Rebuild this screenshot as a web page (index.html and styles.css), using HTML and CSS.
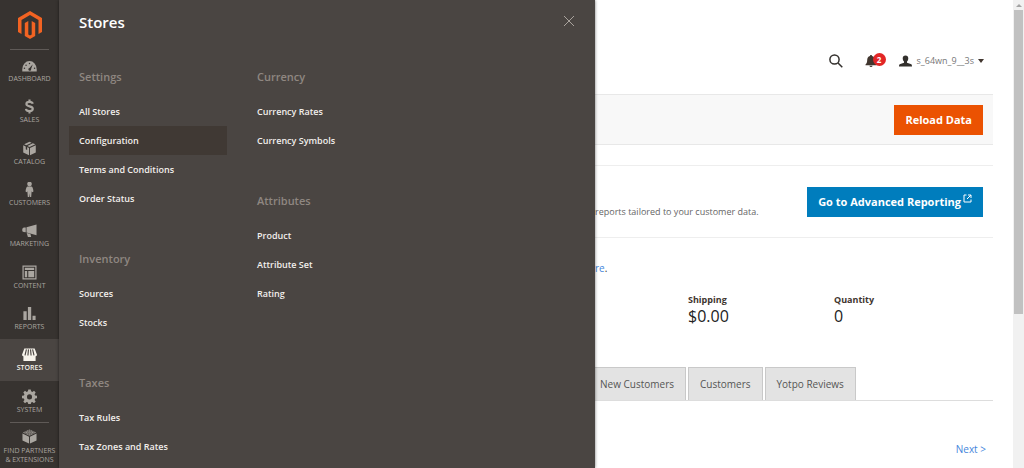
FILE: index.html
```html
<!DOCTYPE html>
<html lang="en">
<head>
<meta charset="utf-8">
<title>Dashboard / Magento Admin</title>
<link rel="stylesheet" href="styles.css">
</head>
<body>
<div class="app">
  <nav class="sidebar" aria-label="Main">
    <a class="logo" href="#" aria-label="Magento">
      <svg viewBox="0 0 24 28"><path fill="#f26322" d="M12 0 24 7v14l-3.500 2V9L12 4 3.500 9v14L0 21V7zM10.300 10v13.500l1.700 1 1.700-1V10l3.500 2v13L12 28l-5.200-3V12z"/></svg>
    </a>
    <ul class="nav-list">
      <li><a class="nav-item" href="#"><svg class="icon" viewBox="0 0 16 16"><path d="M.3 14.500V12a7.700 8.800 0 0 1 15.400 0v2.500z"/><g fill="#373330"><circle cx="2.600" cy="11" r=".8"/><circle cx="4.300" cy="7.700" r=".8"/><circle cx="8" cy="5.800" r=".8"/><circle cx="13.400" cy="11" r=".8"/><path d="m11.500 6.700-1.800 5a1.500 1.500 0 1 1-1.700-1z"/></g></svg>Dashboard</a></li>
      <li><a class="nav-item" href="#"><svg class="icon" viewBox="0 0 16 16"><path fill="none" stroke="currentColor" stroke-width="2.300" d="M11.500 5C11 3.300 9.700 3 8 3 6 3 4.700 3.900 4.700 5.300c0 3.500 6.800 1.600 6.800 5.200C11.500 12 10.200 13 8 13s-3.500-.8-3.800-2.500M8 .5v3M8 12.500v3"/></svg>Sales</a></li>
      <li><a class="nav-item" href="#"><svg class="icon" viewBox="0 0 16 16"><path d="m8 .8 2.300 1-5.800 2.700L2.300 3.400zM11.500 2.300l2.800 1.200L8 6.400 5.700 5.300zM1.300 4.500l2.700 1.300v3l1.500.7v-3l2 .9v7.800l-6.200-3zM14.700 4.500v7.700l-6.200 3V7.400z"/></svg>Catalog</a></li>
      <li><a class="nav-item" href="#"><svg class="icon" viewBox="0 0 16 16"><circle cx="8" cy="2.200" r="2.500"/><path d="M5.800 4.800h4.400c1.200.5 1.700 2.500 2 5.200l-1.300.8-.6-1L9.800 16H8.400L8 12l-.4 4H6.200l-.5-6.200-.6 1L3.800 10c.3-2.700.8-4.700 2-5.200z"/></svg>Customers</a></li>
      <li><a class="nav-item" href="#"><svg class="icon" viewBox="0 0 16 16"><path d="m15.500 1.500-10.700 3V10l10.700 3zM4 4.700 1.800 4.900.3 6v2.700l1.500 1 2.200.1zM5 10.700l4 1 .8 3.300H6.300z"/></svg>Marketing</a></li>
      <li><a class="nav-item" href="#"><svg class="icon" viewBox="0 0 16 16"><path fill-rule="evenodd" d="M.5.5h15v15H.5zm1.300 1.300v12.400h12.400V1.800z"/><path d="M3 3h10v2.300H3zM3 6.500h2.500V13H3zM6.700 6.500H13V13H6.700z"/></svg>Content</a></li>
      <li><a class="nav-item" href="#"><svg class="icon" viewBox="0 0 16 16"><path d="M1.500 5.500h3.500V15H1.500zM6.300 1h3.500v14H6.300zM11.200 10.500h3.300V15h-3.300z"/></svg>Reports</a></li>
      <li><a class="nav-item active" href="#" aria-current="true"><svg class="icon" viewBox="0 0 16 16"><path d="M1.500 8h13v7h-13zM2.500 1.500h11L16 8.300a1.600 1.600 0 0 1-3 .7 1.800 1.800 0 0 1-3.300 0 1.800 1.800 0 0 1-3.400 0A1.800 1.800 0 0 1 3 9a1.600 1.600 0 0 1-3-.7z"/><path stroke="#4a4542" stroke-width="1.200" fill="none" d="M4.700 2.500 3.200 9M6.900 2.500 6.300 9M9.100 2.500 9.700 9M11.300 2.500 12.800 9"/></svg>Stores</a></li>
      <li><a class="nav-item" href="#"><svg class="icon" viewBox="0 0 16 16"><path fill-rule="evenodd" d="m6.700.5h2.600l.4 2 1.400.6 1.700-1.200 1.800 1.800-1.200 1.800.6 1.300 2 .4v2.600l-2 .4-.6 1.400 1.200 1.700-1.800 1.800-1.700-1.200-1.400.6-.4 2H6.700l-.4-2-1.400-.6-1.700 1.200-1.800-1.800 1.200-1.700-.6-1.400-2-.4V7.200l2-.4.6-1.300-1.200-1.800 1.800-1.800 1.700 1.200 1.400-.6zM8 5.700a2.700 2.700 0 1 0 0 5.400 2.700 2.700 0 0 0 0-5.400z"/></svg>System</a></li>
    </ul>
    <a class="nav-item partners" href="#"><svg class="icon" viewBox="0 0 16 16"><path d="m8 .5 7 3.300-7 3.400-7-3.400zM.5 4.800l7 3.400v7.300l-7-3.300zM15.500 4.800v7.400l-7 3.300V8.200z"/><g fill="none" stroke="#373330" stroke-width=".7"><ellipse cx="8" cy="2.200" rx="1.700" ry=".9"/><ellipse cx="4.700" cy="3.800" rx="1.700" ry=".9"/><ellipse cx="11.300" cy="3.800" rx="1.700" ry=".9"/><ellipse cx="8" cy="5.400" rx="1.700" ry=".9"/></g></svg>Find Partners<br>&amp; Extensions</a>
  </nav>

  <section class="flyout" aria-label="Stores">
    <header class="flyout-head">
      <h2>Stores</h2>
      <button class="close" type="button" aria-label="Close"><svg viewBox="0 0 12 12"><path d="m1 1 10 10M11 1 1 11"/></svg></button>
    </header>
    <div class="columns">
      <div class="column">
        <div class="group"><h3>Settings</h3><a href="#">All Stores</a><a class="current" href="#">Configuration</a><a href="#">Terms and Conditions</a><a href="#">Order Status</a></div>
        <div class="group"><h3>Inventory</h3><a href="#">Sources</a><a href="#">Stocks</a></div>
        <div class="group"><h3>Taxes</h3><a href="#">Tax Rules</a><a href="#">Tax Zones and Rates</a></div>
      </div>
      <div class="column">
        <div class="group"><h3>Currency</h3><a href="#">Currency Rates</a><a href="#">Currency Symbols</a></div>
        <div class="group"><h3>Attributes</h3><a href="#">Product</a><a href="#">Attribute Set</a><a href="#">Rating</a></div>
      </div>
    </div>
  </section>

  <main class="page">
    <header class="topbar">
      <button class="tool" type="button" aria-label="Search"><svg class="search-icon" viewBox="0 0 14 14"><circle cx="5.500" cy="5.500" r="4.600"/><path d="m9 9 4.300 4.300"/></svg></button>
      <button class="tool bell" type="button" aria-label="Notifications"><svg viewBox="0 0 12 12"><path d="M6 0c.7 0 1 .4 1 .9 2 .5 2.800 2 2.800 4.100 0 2.500.6 3.500 1.700 4.500v.7H.5v-.7C1.600 8.500 2.200 7.500 2.200 5 2.200 2.900 3 1.400 5 .9 5 .4 5.300 0 6 0zM4.500 10.800h3a1.500 1.200 0 0 1-3 0z"/></svg><span class="badge">2</span></button>
      <button class="tool user" type="button"><svg class="user-icon" viewBox="0 0 14 12"><path d="M7 0c2 0 3 1.200 3 3 0 1.700-.6 2.900-1.400 3.600v1.200l4 1.400c1 .4 1.400 1 1.400 2.800H0c0-1.800.4-2.400 1.400-2.800l4-1.400V6.600C4.600 5.900 4 4.700 4 3c0-1.800 1-3 3-3z"/></svg><span>s_64wn_9__3s</span><i class="caret"></i></button>
    </header>
    <div class="actions"><button class="btn primary" type="button">Reload Data</button></div>
    <section class="advanced">
      <p>reports tailored to your customer data.</p>
      <a class="btn secondary" href="#">Go to Advanced Reporting<svg viewBox="0 0 9 9"><path d="M3.500 1H1v7h7V5.500M5 1h3v3M8 1 4 5"/></svg></a>
    </section>
    <p class="chart-note"><a href="#">re</a>.</p>
    <dl class="totals">
      <div><dt>Shipping</dt><dd>$0.00</dd></div>
      <div><dt>Quantity</dt><dd>0</dd></div>
    </dl>
    <div class="tabs" role="tablist">
      <button type="button" role="tab">New Customers</button>
      <button type="button" role="tab">Customers</button>
      <button type="button" role="tab">Yotpo Reviews</button>
    </div>
    <a class="next" href="#">Next &gt;</a>
  </main>
  <div class="scrollbar" aria-hidden="true"><i class="arrow"></i><div class="thumb"></div></div>
</div>
</body>
</html>
```
FILE: styles.css
```css
* { box-sizing: border-box; }
body { margin: 0; background: #fff; color: #41362f; font: 10px/16px "Open Sans", sans-serif; }
h2, h3, p, ul, dl, dd { margin: 0; padding: 0; }
a { color: inherit; text-decoration: none; }
button { font: inherit; color: inherit; border: 0; background: none; padding: 0; cursor: pointer; }
svg { display: block; fill: currentColor; }

.app { display: flex; height: 100vh; overflow: hidden; }

.sidebar { flex: 0 0 59px; display: flex; flex-direction: column; background: #373330; color: #aaa6a0; }
.logo { display: flex; justify-content: center; height: 50px; padding-top: 11px; margin: 0 10px; border-bottom: 1px solid #5f5a57; }
.logo svg { width: 24px; height: 28px; }
.nav-list { flex: 1; display: flex; flex-direction: column; list-style: none; }
.nav-list li { flex: 1; display: flex; }
.nav-item { flex: 1; display: flex; flex-direction: column; align-items: center; padding-top: 8px; font-size: 7px; line-height: 9px; text-align: center; text-transform: uppercase; white-space: nowrap; }
.icon { width: 15px; height: 15px; margin-bottom: 1px; }
.nav-item.active { background: #4a4542; color: #f7f3eb; font-weight: 600; }
.partners { flex: none; position: relative; padding: 7px 0 4px; }
.partners::before { content: ""; position: absolute; top: 0; left: 10px; right: 10px; border-top: 1px solid #5f5a57; }
.partners .icon { margin-bottom: 2px; }

.flyout { flex: 0 0 536px; background: #4a4542; color: #f2efec; box-shadow: 0 0 3px #0008; z-index: 1; padding: 12px 20px 0 10px; }
.flyout-head { display: flex; justify-content: space-between; align-items: flex-start; height: 20px; padding-left: 10px; }
.flyout h2 { font-size: 15px; line-height: 20px; font-weight: 600; color: #fff; }
.close { padding-top: 3px; }
.close svg { width: 12px; height: 12px; fill: none; stroke: #a9a39d; }
.columns { display: flex; gap: 20px; padding-top: 35px; }
.column { flex: 0 0 158px; }
.group { display: flex; flex-direction: column; margin-bottom: 36px; }
.group h3 { margin-bottom: 10px; padding-left: 10px; font-size: 11px; line-height: 20px; font-weight: 600; color: #8f8781; }
.group a { padding-left: 10px; font-size: 9px; line-height: 29px; font-weight: 600; }
.group .current { background: #403934; }

.page { flex: 1; min-width: 0; padding-right: 20px; }
.topbar { display: flex; align-items: center; justify-content: flex-end; height: 94px; padding: 28px 9px 0 0; }
.search-icon { width: 14px; height: 14px; fill: none; stroke: #33302d; stroke-width: 1.500; }
.bell { position: relative; margin-left: 22px; }
.bell svg { width: 12px; height: 12px; }
.badge { position: absolute; left: 8px; top: -2px; width: 13px; height: 13px; border-radius: 50%; background: #e22626; color: #fff; font-size: 8px; line-height: 13px; font-weight: 700; text-align: center; }
.user { display: flex; align-items: center; margin-left: 22px; color: #33302d; }
.user-icon { width: 13px; height: 12px; margin-right: 5px; }
.user span { color: #777; font-size: 9px; }
.caret { margin-left: 4px; border: 3px solid transparent; border-top: 4px solid #41362f; border-bottom: 0; }

.actions { display: flex; justify-content: flex-end; align-items: center; padding: 10px; height: 51px; border: solid #e8e8e8; border-width: 1px 0; background: #f8f8f8; }
.btn { display: flex; align-items: center; height: 30px; padding: 0 11px; color: #fff; font-size: 11px; font-weight: 700; white-space: nowrap; }
.primary { background: #eb5202; }
.secondary { background: #007dbd; }
.secondary svg { width: 9px; height: 9px; margin: 0 0 6px 2px; fill: none; stroke: #fff; }
.advanced { display: flex; justify-content: space-between; align-items: center; height: 73px; margin-top: 20px; padding-right: 10px; border: solid #eee; border-width: 1px 0; color: #666; }
.advanced p { padding-top: 21px; font-size: 9px; white-space: nowrap; }
.chart-note { padding-top: 22px; }
.chart-note a, .next { color: #4686dc; }
.totals { display: grid; grid-template-columns: 146px 1fr; padding: 17px 0 0 93px; }
.totals dt { font-size: 9px; line-height: 14px; font-weight: 700; }
.totals dd { font-size: 16px; line-height: 18px; color: #222; }
.tabs { display: flex; gap: 2px; margin-top: 42px; border-bottom: 1px solid #ddd; }
.tabs button { height: 33px; padding: 0 11px; border: 1px solid #c9c9c9; border-bottom: 0; background: #e3e3e3; color: #555; white-space: nowrap; }
.tabs button:first-child { border-left: 0; padding-left: 5px; }
.next { display: block; padding: 40px 7px 0 0; text-align: right; }

.scrollbar { flex: 0 0 11px; background: #f1f1f1; }
.arrow { display: block; margin: 4px auto 3px; width: 0; border: 3px solid transparent; border-bottom-color: #a3a3a3; border-top: 0; }
.thumb { height: 65%; margin: 0 1px; background: #c1c1c1; }
```
